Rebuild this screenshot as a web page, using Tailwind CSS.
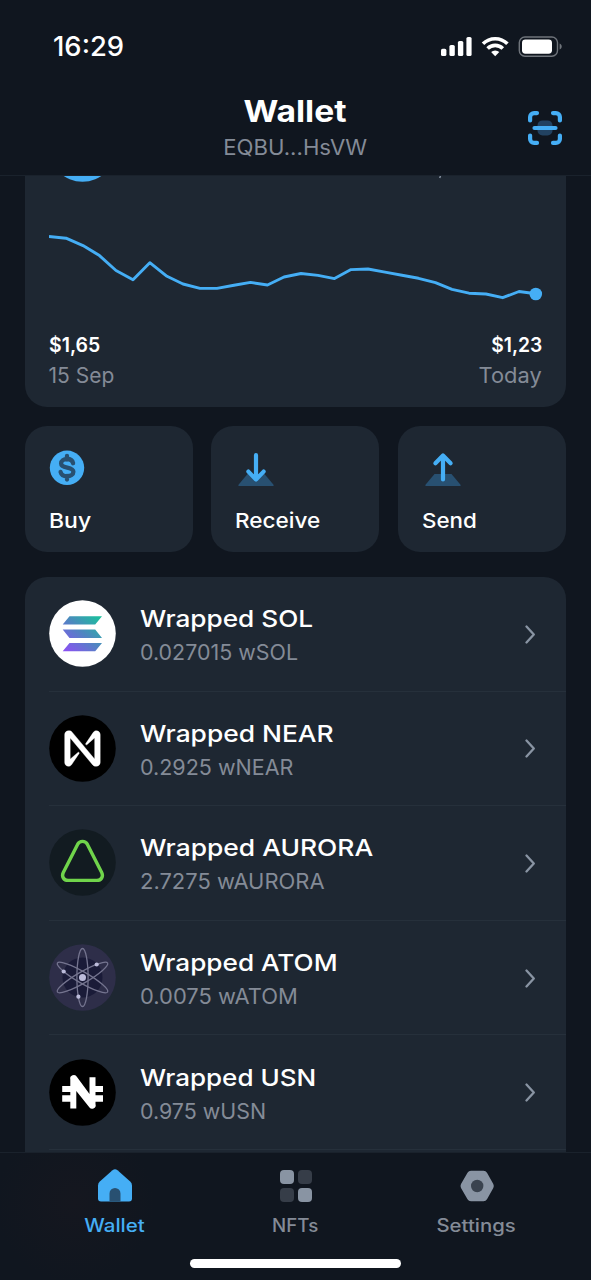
<!DOCTYPE html>
<html lang="en">
<head>
<meta charset="utf-8">
<title>Wallet</title>
<script src="https://cdn.jsdelivr.net/npm/@tailwindcss/browser@4"></script>
</head>
<body class="bg-[#10161f]">
<div class="flex h-[1280px] w-[591px] flex-col overflow-hidden bg-[#10161f] font-[Inter,sans-serif] text-white">
  <header class="flex h-[176px] shrink-0 flex-col border-b border-[#1a222c]">
    <div class="flex h-[93px] items-center justify-between pr-[29px] pl-[53px]">
      <span class="origin-left scale-x-[1.015] pt-px text-[27px] leading-8 font-medium">16:29</span>
      <svg class="mb-px h-6 w-[121px]" viewBox="0 0 121 24" fill="#fff">
        <rect x="0" y="14.8" width="5.4" height="7.2" rx="1.6"/><rect x="8.4" y="10.9" width="5.4" height="11.1" rx="1.6"/><rect x="16.9" y="7" width="5.4" height="15" rx="1.6"/><rect x="25.4" y="3" width="5.2" height="19" rx="1.6"/>
        <g fill="none" stroke="#fff" stroke-width="3.6"><path d="M42 9.8a17.2 17.2 0 0 1 24.4 0"/><path d="M46.6 14.5a10.8 10.8 0 0 1 15.2 0"/></g>
        <path d="M54.2 22.2l-4.1-4.2a6 6 0 0 1 8.2 0z"/>
        <rect x="78.3" y="3" width="38.2" height="19.2" rx="5.6" fill="none" stroke="#6f747b" stroke-width="1.4"/>
        <rect x="81" y="5.5" width="30" height="14.2" rx="3.4"/><path d="M118.6 9.6c2.8 1 2.8 5 0 6z" fill="#6f747b"/>
      </svg>
    </div>
    <div class="grid grid-cols-[62px_1fr_62px] items-center">
      <span></span>
      <div class="flex flex-col items-center">
        <h1 class="mr-[2px] scale-x-[1.12] text-[30px] leading-9 font-bold">Wallet</h1>
        <p class="scale-x-[1.055] text-[21px] leading-[37px] text-[#848b97]">EQBU...HsVW</p>
      </div>
      <svg class="mb-[4px] -ml-px h-[34px] w-[34px]" viewBox="0 0 34 34" fill="none" stroke="#45aef5" stroke-width="4.2" stroke-linecap="round" stroke-linejoin="round">
        <rect x="9.5" y="9.4" width="15" height="15" rx="5" fill="#224261" stroke="none"/>
        <path d="M2.1 9.5V6.1a4 4 0 0 1 4-4H9M25 2.1h2.9a4 4 0 0 1 4 4v3.4M31.9 24.5v3.4a4 4 0 0 1-4 4H25M9 31.9H6.1a4 4 0 0 1-4-4v-3.4M6.5 17h21"/>
      </svg>
    </div>
  </header>

  <main class="flex min-h-0 flex-1 flex-col overflow-hidden pr-[25px] pl-[24.5px]">
    <section class="flex h-[231.3px] shrink-0 flex-col rounded-b-[22px] bg-[#1e2732] px-6">
      <svg class="h-[150px] w-[494px] shrink-0" viewBox="0 0 494 150">
        <circle cx="33.5" cy="-27.5" r="33.3" fill="#45aef5"/>
        <path d="M391.5 0l-.8 2" stroke="#8994a3" stroke-width="1.5"/>
        <path d="M0 60.5L17 62.2 34 69.6 50.5 79.6 67 94.5 84 103.7 100.8 86.7 118 100.3 134 108 151 112.4 168 112.4 185 109.3 201.5 106.4 218.5 109 235 101 252 97.5 269 99.4 285.5 102.6 302 93.6 319 93 336 96.2 353 99.2 369.5 102.3 386.5 106.7 403 113.3 420 117.2 437 118 453.7 121.7 470 115.5 487 117.7" fill="none" stroke="#45aef5" stroke-width="2.9" stroke-linejoin="round"/>
        <circle cx="486.8" cy="118" r="6.3" fill="#45aef5"/>
      </svg>
      <div class="flex justify-between pt-[3px]">
        <div class="flex flex-col items-start">
          <span class="origin-left scale-x-[0.95] text-[20.5px] leading-[31px] font-semibold">$1,65</span>
          <span class="text-[21px] leading-[31px] text-[#848b97]">15 Sep</span>
        </div>
        <div class="flex flex-col items-end">
          <span class="origin-right scale-x-[0.94] text-[20.5px] leading-[31px] font-semibold">$1,23</span>
          <span class="origin-right scale-x-[1.04] text-[21px] leading-[31px] text-[#848b97]">Today</span>
        </div>
      </div>
    </section>

    <nav class="mt-[18.9px] grid h-[126.3px] shrink-0 grid-cols-3 gap-[18.5px]">
      <button class="flex flex-col items-start rounded-[22px] bg-[#1e2732] pt-[24px] pl-6">
        <svg class="h-9 w-9" viewBox="0 0 36 36"><circle cx="18" cy="17.8" r="17.2" fill="#45aef5"/><path d="M18 6v3.500M18 26v3.500M24.100 13.200c-.6-2.800-3-4.200-6-4.200-3.400 0-6 1.700-6 4.400 0 5.900 12.300 2.500 12.300 8.400 0 2.800-2.800 4.400-6.300 4.400s-5.800-1.400-6.500-4.300" fill="none" stroke="#285071" stroke-width="4.300" stroke-linecap="round"/></svg>
        <span class="mt-[20px] origin-left scale-x-[1.12] text-[20.5px] leading-[30px] font-medium">Buy</span>
      </button>
      <button class="flex flex-col items-start rounded-[22px] bg-[#1e2732] pt-[24px] pl-6">
        <svg class="ml-[3px] h-9 w-9" viewBox="0 0 36 36"><path d="M9.500 24h17l8.800 10.500q1 1.700-1 1.700H1.700q-2 0-1-1.700z" fill="#285071"/><path d="M18 5.200v24.300M10.400 21.600L18 29.500l7.600-7.900" fill="none" stroke="#45aef5" stroke-width="4.200" stroke-linecap="round" stroke-linejoin="round"/></svg>
        <span class="mt-[20px] origin-left scale-x-[1.1] text-[20.5px] leading-[30px] font-medium">Receive</span>
      </button>
      <button class="flex flex-col items-start rounded-[22px] bg-[#1e2732] pt-[24px] pl-6">
        <svg class="ml-[3px] h-9 w-9" viewBox="0 0 36 36"><path d="M9.500 24h17l8.800 10.500q1 1.700-1 1.700H1.700q-2 0-1-1.700z" fill="#285071"/><path d="M18 29.500V5.500M10.400 13.300L18 5.500l7.600 7.800" fill="none" stroke="#45aef5" stroke-width="4.200" stroke-linecap="round" stroke-linejoin="round"/></svg>
        <span class="mt-[20px] origin-left scale-x-[1.09] text-[20.5px] leading-[30px] font-medium">Send</span>
      </button>
    </nav>

    <ul class="mt-[24.500px] shrink-0 rounded-t-[22px] bg-[#1e2732] pl-6">
      <li class="flex h-[114.600px] items-center border-b border-[#26303b]">
        <svg class="h-[67px] w-[67px]" viewBox="0 0 67 67"><defs><linearGradient id="sol" gradientUnits="userSpaceOnUse" x1="18" y1="52" x2="50" y2="14"><stop offset="0" stop-color="#8a52f2"/><stop offset=".5" stop-color="#4f86c0"/><stop offset="1" stop-color="#16c49a"/></linearGradient></defs><circle cx="33.500" cy="33.500" r="33.300" fill="#fff"/><path d="M20.500 16.200H53l-6.800 8.300H13.700zM13.700 29.600h32.500l6.800 8.300H20.500zM20.500 43H53l-6.800 8.300H13.700z" fill="url(#sol)"/></svg>
        <div class="ml-[24px] flex flex-1 flex-col items-start pt-[5px]"><span class="origin-left scale-x-[1.115] text-[23.500px] leading-[34px] font-medium">Wrapped SOL</span><span class="origin-left scale-x-[1.02] text-[21px] leading-[34px] text-[#848b97]">0.027015 wSOL</span></div>
        <svg class="mr-[30px] h-5 w-3" viewBox="0 0 12 20" fill="none" stroke="#8994a3" stroke-width="2.300" stroke-linecap="round" stroke-linejoin="round"><path d="M2.500 2.500l7.300 8-7.300 8"/></svg>
      </li>
      <li class="flex h-[114.600px] items-center border-b border-[#26303b]">
        <svg class="h-[67px] w-[67px]" viewBox="0 0 67 67"><circle cx="33.500" cy="33.500" r="33.300"/><path transform="translate(15.700 15.800) scale(.394)" d="M72.2,4.6L53.4,32.5c-1.3,1.9,1.2,4.2,3,2.6L74.9,19c0.5-0.4,1.2-0.1,1.2,0.6v50.3c0,0.7-0.9,1-1.3,0.5l-56-67C17,1.2,14.4,0,11.5,0h-2C4.3,0,0,4.3,0,9.6v70.8C0,85.700,4.300,90,9.600,90c3.300,0,6.400-1.700,8.200-4.600l18.800-27.900c1.300-1.900-1.200-4.200-3-2.600l-18.500,16c-0.500,0.400-1.200,0.100-1.200-0.600V20.100c0-0.700,0.900-1,1.300-0.500l56,67c1.800,2.200,4.500,3.400,7.300,3.400h2c5.300,0,9.600-4.300,9.600-9.600V9.600c0-5.300-4.300-9.600-9.600-9.600C77.100,0,74,1.700,72.200,4.600z" fill="#fff" stroke="#fff" stroke-width="1"/></svg>
        <div class="ml-[24px] flex flex-1 flex-col items-start pt-[5px]"><span class="origin-left scale-x-[1.122] text-[23.500px] leading-[34px] font-medium">Wrapped NEAR</span><span class="origin-left scale-x-[1.025] text-[21px] leading-[34px] text-[#848b97]">0.2925 wNEAR</span></div>
        <svg class="mr-[30px] h-5 w-3" viewBox="0 0 12 20" fill="none" stroke="#8994a3" stroke-width="2.300" stroke-linecap="round" stroke-linejoin="round"><path d="M2.500 2.500l7.300 8-7.300 8"/></svg>
      </li>
      <li class="flex h-[114.600px] items-center border-b border-[#26303b]">
        <svg class="h-[67px] w-[67px]" viewBox="0 0 67 67"><circle cx="33.500" cy="33.500" r="33.300" fill="#121b21"/><path d="M28.700 15.200a5.500 5.500 0 0 1 9.600 0l14.400 28.400c2 4-.5 7.800-4.700 7.800H19c-4.200 0-6.700-3.800-4.700-7.800z" fill="none" stroke="#70d44b" stroke-width="3.400"/></svg>
        <div class="ml-[24px] flex flex-1 flex-col items-start pt-[5px]"><span class="origin-left scale-x-[1.124] text-[23.500px] leading-[34px] font-medium">Wrapped AURORA</span><span class="origin-left scale-x-[1.045] text-[21px] leading-[34px] text-[#848b97]">2.7275 wAURORA</span></div>
        <svg class="mr-[30px] h-5 w-3" viewBox="0 0 12 20" fill="none" stroke="#8994a3" stroke-width="2.300" stroke-linecap="round" stroke-linejoin="round"><path d="M2.500 2.500l7.300 8-7.300 8"/></svg>
      </li>
      <li class="flex h-[114.600px] items-center border-b border-[#26303b]">
        <svg class="h-[67px] w-[67px]" viewBox="0 0 67 67"><circle cx="33.500" cy="33.500" r="33.300" fill="#2e2e49"/><circle cx="33.500" cy="33.500" r="20" fill="#1a1b38"/><g fill="none" stroke="#74748f" stroke-width="1.300"><ellipse cx="33.500" cy="33.500" rx="5.600" ry="29"/><ellipse cx="33.500" cy="33.500" rx="5.600" ry="29" transform="rotate(60 33.500 33.500)"/><ellipse cx="33.500" cy="33.500" rx="5.600" ry="29" transform="rotate(120 33.500 33.500)"/></g><g fill="#bcbcdb"><circle cx="33.500" cy="33.500" r="3.500"/><circle cx="47.700" cy="20.500" r="2.100"/><circle cx="14.700" cy="27.500" r="2.100"/><circle cx="29.400" cy="52.700" r="2.100"/></g></svg>
        <div class="ml-[24px] flex flex-1 flex-col items-start pt-[5px]"><span class="origin-left scale-x-[1.113] text-[23.500px] leading-[34px] font-medium">Wrapped ATOM</span><span class="origin-left scale-x-[1.045] text-[21px] leading-[34px] text-[#848b97]">0.0075 wATOM</span></div>
        <svg class="mr-[30px] h-5 w-3" viewBox="0 0 12 20" fill="none" stroke="#8994a3" stroke-width="2.300" stroke-linecap="round" stroke-linejoin="round"><path d="M2.500 2.500l7.300 8-7.300 8"/></svg>
      </li>
      <li class="flex h-[114.600px] items-center border-b border-[#26303b]">
        <svg class="h-[67px] w-[67px]" viewBox="0 0 67 67"><circle cx="33.500" cy="33.500" r="33.300"/><path d="M13.200 27h9.300v6h-9.300zM13.200 36.300h9.300v6.400h-9.300zM44 27h10v6H44zM44 36.300h10v6.400H44zM21.300 20.500a3.600 3.600 0 0 1 6.700-2.500L40.500 35V18.300h6V45a3.600 3.600 0 0 1-6.600 2.800L27.300 32v17.500h-6z" fill="#fff"/></svg>
        <div class="ml-[24px] flex flex-1 flex-col items-start pt-[5px]"><span class="origin-left scale-x-[1.107] text-[23.500px] leading-[34px] font-medium">Wrapped USN</span><span class="origin-left scale-x-[1.02] text-[21px] leading-[34px] text-[#848b97]">0.975 wUSN</span></div>
        <svg class="mr-[30px] h-5 w-3" viewBox="0 0 12 20" fill="none" stroke="#8994a3" stroke-width="2.300" stroke-linecap="round" stroke-linejoin="round"><path d="M2.500 2.500l7.300 8-7.300 8"/></svg>
      </li>
      <li class="h-5"></li>
    </ul>
  </main>

  <footer class="flex h-[128px] shrink-0 flex-col items-center border-t border-[#1a222c] bg-[radial-gradient(circle_at_75px_50px,#15171f_0,#10161f_80px)]">
    <div class="flex h-[106px] w-full justify-center pt-[15px]">
      <a class="flex w-[181px] flex-col items-center">
        <svg class="h-9 w-9" viewBox="0 0 36 36"><path d="M15.500 2.300q2.500-2 5 0L33.200 13.600q1.800 1.700 1.800 4V30.500q0 3-3 3H4q-3 0-3-3V17.600q0-2.300 1.800-4z" fill="#45aef5"/><path d="M12.500 33.500V25.500a5.500 5.500 0 0 1 11 0v8z" fill="#285071"/></svg>
        <span class="mt-[8px] scale-x-[1.14] text-[18px] leading-7 font-medium text-[#45aef5]">Wallet</span>
      </a>
      <a class="flex w-[181px] flex-col items-center">
        <svg class="h-9 w-9" viewBox="0 0 36 36" fill="#8994a3"><rect x="2" y="2" width="14" height="14" rx="4"/><rect x="20" y="20" width="14" height="14" rx="4"/><g fill="#363d48"><rect x="20" y="2" width="14" height="14" rx="4"/><rect x="2" y="20" width="14" height="14" rx="4"/></g></svg>
        <span class="mt-[8px] scale-x-[1.04] text-[18px] leading-7 font-medium text-[#848b97]">NFTs</span>
      </a>
      <a class="flex w-[181px] flex-col items-center">
        <svg class="h-9 w-9" viewBox="0 0 36 36"><path d="M12 2.800h12.500q2.300 0 3.500 2L34.300 16q1 2 0 4L28 31.300q-1.200 2-3.500 2H12q-2.300 0-3.500-2L2 20q-1-2 0-4L8.500 4.800q1.200-2 3.500-2z" fill="#8994a3"/><circle cx="18.200" cy="18" r="6.200" fill="#3a434f"/></svg>
        <span class="mt-[8px] scale-x-[1.13] text-[18px] leading-7 font-medium text-[#848b97]">Settings</span>
      </a>
    </div>
    <div class="h-[9px] w-[211px] rounded-full bg-white"></div>
  </footer>
</div>
</body>
</html>
